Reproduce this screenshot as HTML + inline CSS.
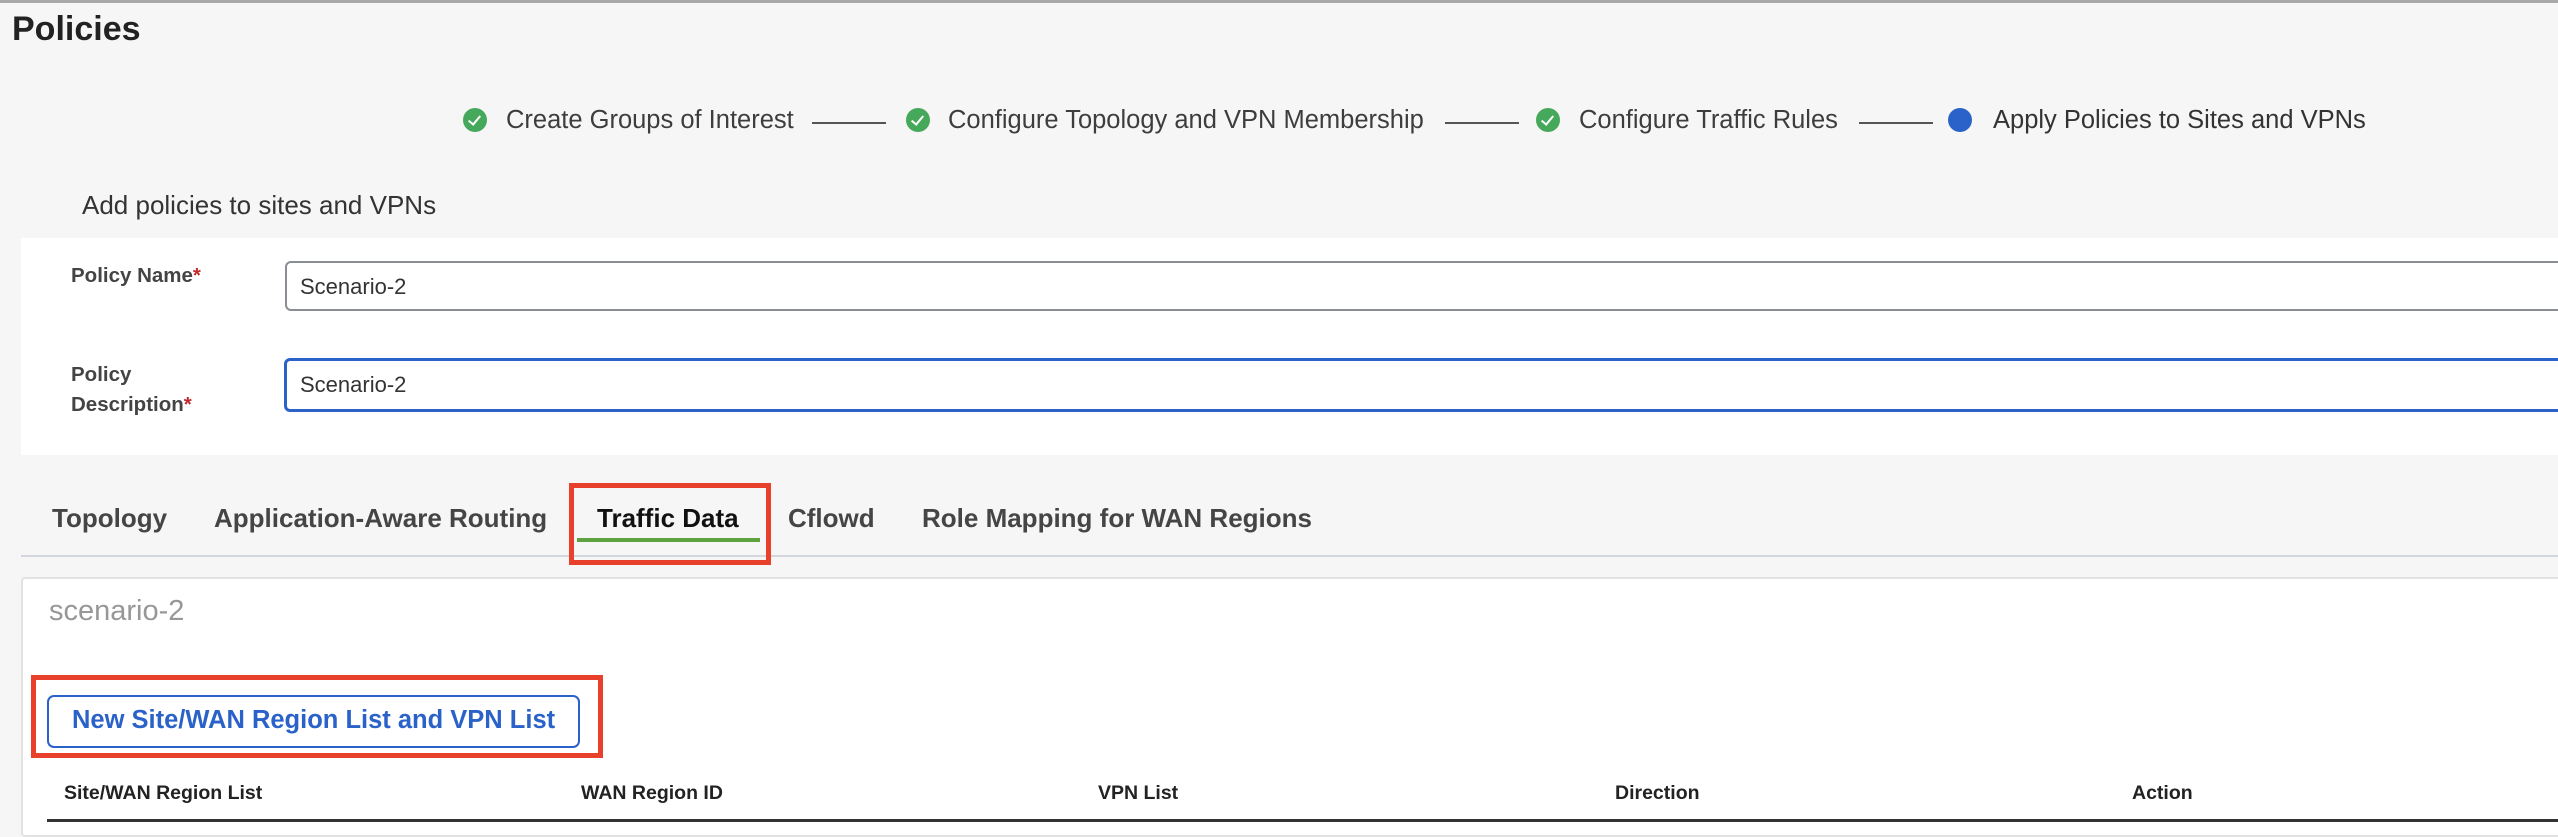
<!DOCTYPE html>
<html><head><meta charset="utf-8"><style>
*{margin:0;padding:0;box-sizing:border-box}
body{width:2558px;height:824px;overflow:hidden;background:#f6f6f6;font-family:"Liberation Sans",sans-serif;position:relative;color:#444}
.a{position:absolute;white-space:nowrap}
.topline{left:0;top:0;width:2558px;height:3px;background:#a9a9a9}
.step{font-size:25.5px;color:#3d3d3d;top:106px}
.chk{width:24px;height:24px;border-radius:50%;background:#45a85a;top:108px}
.chk:after{content:"";position:absolute;left:8px;top:5px;width:5px;height:10px;border:solid #fff;border-width:0 2px 2px 0;transform:rotate(40deg)}
.ln{height:2px;background:#555;top:122px;width:74px}
.tab{font-size:26px;font-weight:bold;color:#454545;top:503px}
.th{font-size:19.5px;font-weight:bold;color:#222;top:782px}
</style></head><body>
<div class="a topline"></div>
<div class="a" style="left:12px;top:10px;font-size:34px;font-weight:bold;color:#222">Policies</div>

<div class="a chk" style="left:463px"></div>
<div class="a step" style="left:506px">Create Groups of Interest</div>
<div class="a ln" style="left:812px"></div>
<div class="a chk" style="left:906px"></div>
<div class="a step" style="left:948px">Configure Topology and VPN Membership</div>
<div class="a ln" style="left:1445px"></div>
<div class="a chk" style="left:1536px"></div>
<div class="a step" style="left:1579px">Configure Traffic Rules</div>
<div class="a ln" style="left:1859px"></div>
<div class="a" style="left:1948px;top:108px;width:24px;height:24px;border-radius:50%;background:#2a62c9"></div>
<div class="a step" style="left:1993px;color:#333">Apply Policies to Sites and VPNs</div>

<div class="a" style="left:82px;top:190px;font-size:26px;color:#333">Add policies to sites and VPNs</div>

<div class="a" style="left:21px;top:238px;width:2537px;height:217px;background:#fff"></div>
<div class="a" style="left:71px;top:264px;font-size:20.5px;font-weight:bold;color:#444">Policy Name<span style="color:#c0282d">*</span></div>
<div class="a" style="left:285px;top:261px;width:2290px;height:50px;border:2px solid #8a8d93;border-radius:6px;background:#fff"></div>
<div class="a" style="left:300px;top:274px;font-size:22px;color:#333">Scenario-2</div>
<div class="a" style="left:71px;top:360px;font-size:20.5px;font-weight:bold;color:#444;line-height:30px">Policy<br>Description<span style="color:#c0282d">*</span></div>
<div class="a" style="left:284px;top:358px;width:2290px;height:54px;border:3px solid #2a62c9;border-radius:6px;background:#fff"></div>
<div class="a" style="left:300px;top:372px;font-size:22px;color:#333">Scenario-2</div>

<div class="a tab" style="left:52px">Topology</div>
<div class="a tab" style="left:214px">Application-Aware Routing</div>
<div class="a tab" style="left:597px;color:#111">Traffic Data</div>
<div class="a tab" style="left:788px">Cflowd</div>
<div class="a tab" style="left:922px">Role Mapping for WAN Regions</div>
<div class="a" style="left:21px;top:555px;width:2537px;height:2px;background:#d3d7dc"></div>
<div class="a" style="left:577px;top:538px;width:183px;height:4px;background:#5ea33f"></div>
<div class="a" style="left:569px;top:483px;width:202px;height:82px;border:5px solid #e8402a"></div>

<div class="a" style="left:21px;top:577px;width:2545px;height:260px;background:#fff;border:2px solid #e2e2e2;border-radius:4px"></div>
<div class="a" style="left:49px;top:595px;font-size:29px;color:#979797">scenario-2</div>

<div class="a" style="left:47px;top:695px;width:533px;height:53px;border:2px solid #2a62c9;border-radius:7px;background:#fff"></div>
<div class="a" style="left:72px;top:706px;font-size:25.5px;font-weight:bold;color:#2a62c9">New Site/WAN Region List and VPN List</div>
<div class="a" style="left:31px;top:675px;width:572px;height:83px;border:5px solid #e8402a"></div>

<div class="a th" style="left:64px">Site/WAN Region List</div>
<div class="a th" style="left:581px">WAN Region ID</div>
<div class="a th" style="left:1098px">VPN List</div>
<div class="a th" style="left:1615px">Direction</div>
<div class="a th" style="left:2132px">Action</div>
<div class="a" style="left:47px;top:819px;width:2511px;height:3px;background:#333"></div>
</body></html>
